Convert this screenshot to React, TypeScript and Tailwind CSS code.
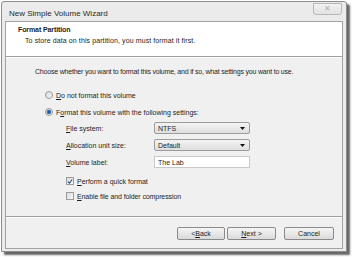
import React from "react";

function Radio({ checked }: { checked?: boolean }) {
    return (
        <span className="flex h-[8px] w-[8px] items-center justify-center rounded-full border border-[#9a9b9b] bg-gradient-to-br from-[#d8d8d8] to-[#f8f8f8]">
            {checked && <span className="h-[4px] w-[4px] rounded-full bg-[#1c5fa8] shadow-[0_0_1px_#4a90d8]" />}
        </span>
    );
}

function Check({ checked }: { checked?: boolean }) {
    return (
        <span className="flex h-[8px] w-[8px] items-center justify-center border border-[#9a9b9b] bg-gradient-to-br from-[#dcdcdc] to-[#f8f8f8]">
            {checked && (
                <svg width="7" height="7" viewBox="0 0 7 7">
                    <path d="M1 3.6 L2.8 5.4 L6 1.2" fill="none" stroke="#2a4e8a" strokeWidth="1.3" />
                </svg>
            )}
        </span>
    );
}

function Select({ value }: { value: string }) {
    return (
        <div className="flex h-[12px] w-[96px] items-center justify-between rounded-[2px] border border-[#9c9c9c] bg-gradient-to-b from-[#f4f4f4] to-[#dedede] pl-[3px] pr-[4px]">
            <span>{value}</span>
            <svg width="5" height="3" viewBox="0 0 5 3">
                <path d="M0 0 H5 L2.5 3 Z" fill="#111" />
            </svg>
        </div>
    );
}

function Button({ children, className = "" }: { children: React.ReactNode; className?: string }) {
    return (
        <div className={`flex h-[13px] items-center justify-center rounded-[2px] border border-[#8a8a8a] bg-gradient-to-b from-[#f5f5f5] to-[#dadada] ${className}`}>
            {children}
        </div>
    );
}

export default function App() {
    return (
        <div className="h-[257px] w-[354px] bg-white font-['Liberation_Sans',sans-serif] text-[7px] leading-none text-[#1e1e1e]">
            <div className="ml-px mt-px flex h-[251px] w-[346px] flex-col rounded-t-[3px] border border-[#8d8d8d] bg-[#ebebeb] px-[3px] pb-[2px] shadow-[3px_3px_2px_rgba(0,0,0,0.6)]">
                {/* Title bar */}
                <div className="flex h-[19px] items-start justify-between">
                    <span className="pl-[4px] pt-[8px] text-[8px] text-[#2a2a2a]">New Simple Volume Wizard</span>
                    <div className="mr-[1px] mt-[1px] flex h-[12px] w-[29px] items-center justify-center rounded-b-[3px] border border-[#b8b8b8] bg-gradient-to-b from-[#f2f2f2] to-[#e2e2e2]">
                        <span className="text-[8px] text-[#b0b0b0]">✕</span>
                    </div>
                </div>

                {/* Client */}
                <div className="flex flex-1 flex-col border border-[#a2a2a2] bg-[#f0f0f0]">
                    <div className="h-[35px] border-b border-[#a0a0a0] bg-white pl-[12px] pt-[4px]">
                        <div className="font-bold tracking-[-0.1px]">Format Partition</div>
                        <div className="mt-[4px] pl-[7px] tracking-[0.1px]">To store data on this partition, you must format it first.</div>
                    </div>

                    <div className="flex flex-1 flex-col border-t border-white pl-[29px] pt-[10px]">
                        <div className="tracking-[-0.2px]">Choose whether you want to format this volume, and if so, what settings you want to use.</div>

                        <div className="mt-[16px] flex items-center gap-[3px] pl-[10px]">
                            <Radio />
                            <span>
                                <u>D</u>o not format this volume
                            </span>
                        </div>
                        <div className="mt-[9px] flex items-center gap-[3px] pl-[10px]">
                            <Radio checked />
                            <span>
                                F<u>o</u>rmat this volume with the following settings:
                            </span>
                        </div>

                        <div className="mt-[6px] grid grid-cols-[88px_96px] items-center gap-y-[5px] pl-[31px]">
                            <span>
                                <u>F</u>ile system:
                            </span>
                            <Select value="NTFS" />
                            <span>
                                <u>A</u>llocation unit size:
                            </span>
                            <Select value="Default" />
                            <span>
                                <u>V</u>olume label:
                            </span>
                            <div className="flex h-[12px] items-center border border-[#c8c8c8] bg-white pl-[3px]">The Lab</div>
                        </div>

                        <div className="mt-[9px] flex items-center gap-[3px] pl-[31px]">
                            <Check checked />
                            <span>
                                <u>P</u>erform a quick format
                            </span>
                        </div>
                        <div className="mt-[7px] flex items-center gap-[3px] pl-[31px]">
                            <Check />
                            <span className="tracking-[-0.1px]">
                                <u>E</u>nable file and folder compression
                            </span>
                        </div>
                    </div>

                    <div className="flex h-[32px] items-start justify-end border-t border-[#a0a0a0] pr-[8px] pt-[10px] shadow-[inset_0_1px_0_#fff]">
                        <Button className="w-[48px]">
                            &lt; <u>B</u>ack
                        </Button>
                        <Button className="ml-[2px] w-[49px]">
                            <u>N</u>ext &gt;
                        </Button>
                        <Button className="ml-[8px] w-[50px]">Cancel</Button>
                    </div>
                </div>
            </div>
        </div>
    );
}
